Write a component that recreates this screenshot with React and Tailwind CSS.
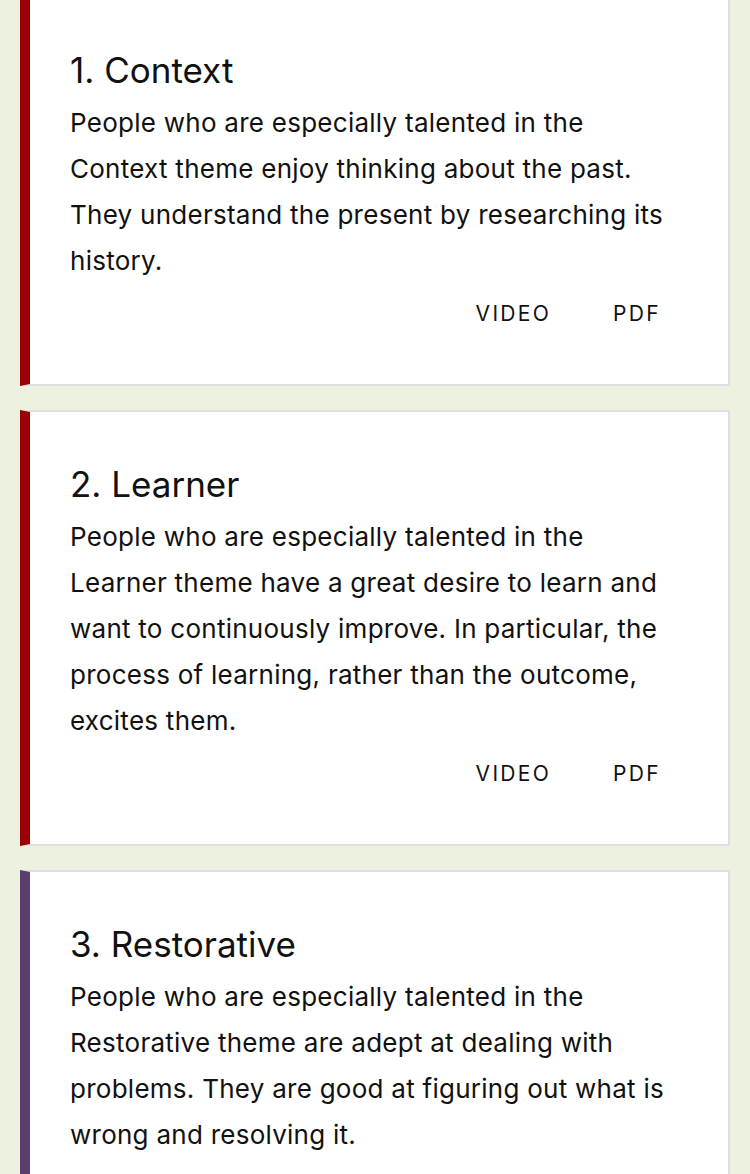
const temas = [
    {
        titulo: "1. Context",
        texto: "People who are especially talented in the Context theme enjoy thinking about the past. They understand the present by researching its history.",
        cor: "border-l-[#9b0000]",
    },
    {
        titulo: "2. Learner",
        texto: "People who are especially talented in the Learner theme have a great desire to learn and want to continuously improve. In particular, the process of learning, rather than the outcome, excites them.",
        cor: "border-l-[#9b0000]",
    },
    {
        titulo: "3. Restorative",
        texto: "People who are especially talented in the Restorative theme are adept at dealing with problems. They are good at figuring out what is wrong and resolving it.",
        cor: "border-l-[#5b3d6e]",
    },
];

function CartaoTema({ tema }) {
    return (
        <div
            className={`bg-white border-2 border-[#dedede] border-l-[10px] ${tema.cor} pt-[52px] pb-[50px] pl-[40px] pr-[51px]`}
        >
            <h2 className="text-[35px] leading-[40px] text-[#111]">{tema.titulo}</h2>
            <p className="mt-[10px] text-[26px] leading-[46px] tracking-[0.01em] text-[#111]">{tema.texto}</p>
            <div className="mt-[10px] flex justify-end gap-[30px] h-[40px] items-center">
                <button className="px-4 text-[21px] tracking-[0.11em] text-[#111]">VIDEO</button>
                <button className="px-4 text-[21px] tracking-[0.11em] text-[#111]">PDF</button>
            </div>
        </div>
    );
}

export default function App() {
    return (
        <div
            className="h-[1174px] bg-[#ecf2df] overflow-hidden"
            style={{ fontFamily: "Inter, 'Noto Sans', sans-serif" }}
        >
            <div className="-mt-1 pl-[20px] pr-[20px] flex flex-col gap-[24px]">
                {temas.map((tema) => (
                    <CartaoTema key={tema.titulo} tema={tema} />
                ))}
            </div>
        </div>
    );
}
